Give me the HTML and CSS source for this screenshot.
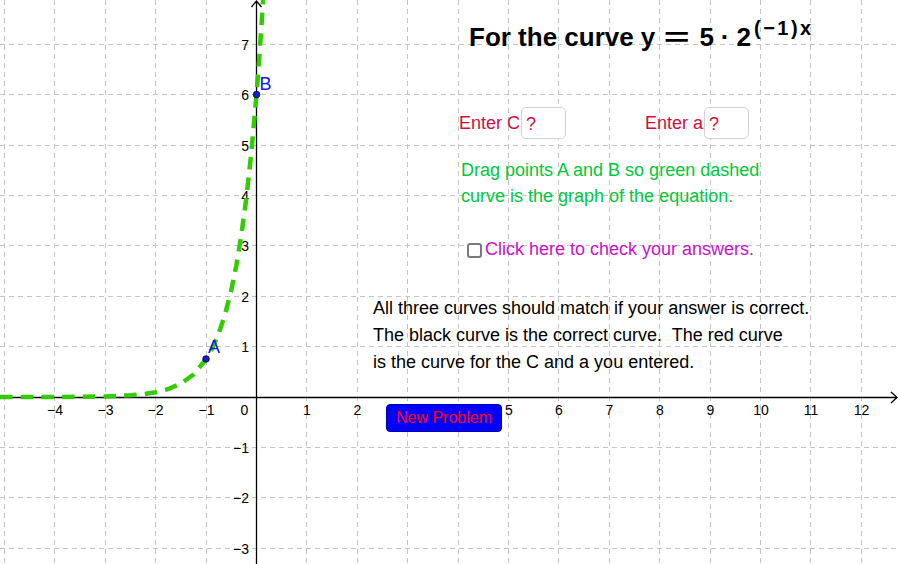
FILE: index.html
```html
<!DOCTYPE html>
<html>
<head>
<meta charset="utf-8">
<link rel="stylesheet" href="styles.css">
</head>
<body>
<div class="stage">
  <svg class="graph" width="900" height="564" viewBox="0 0 900 564" xmlns="http://www.w3.org/2000/svg">
    <g class="grid">
      <line x1="4.5" y1="0" x2="4.5" y2="564"/>
      <line x1="54.5" y1="0" x2="54.5" y2="564"/>
      <line x1="105.5" y1="0" x2="105.5" y2="564"/>
      <line x1="155.5" y1="0" x2="155.5" y2="564"/>
      <line x1="206.5" y1="0" x2="206.5" y2="564"/>
      <line x1="306.5" y1="0" x2="306.5" y2="564"/>
      <line x1="357.5" y1="0" x2="357.5" y2="564"/>
      <line x1="407.5" y1="0" x2="407.5" y2="564"/>
      <line x1="458.5" y1="0" x2="458.5" y2="564"/>
      <line x1="508.5" y1="0" x2="508.5" y2="564"/>
      <line x1="558.5" y1="0" x2="558.5" y2="564"/>
      <line x1="609.5" y1="0" x2="609.5" y2="564"/>
      <line x1="659.5" y1="0" x2="659.5" y2="564"/>
      <line x1="710.5" y1="0" x2="710.5" y2="564"/>
      <line x1="760.5" y1="0" x2="760.5" y2="564"/>
      <line x1="810.5" y1="0" x2="810.5" y2="564"/>
      <line x1="861.5" y1="0" x2="861.5" y2="564"/>
      <line x1="0" y1="44.5" x2="900" y2="44.5"/>
      <line x1="0" y1="94.5" x2="900" y2="94.5"/>
      <line x1="0" y1="145.5" x2="900" y2="145.5"/>
      <line x1="0" y1="195.5" x2="900" y2="195.5"/>
      <line x1="0" y1="245.5" x2="900" y2="245.5"/>
      <line x1="0" y1="296.5" x2="900" y2="296.5"/>
      <line x1="0" y1="346.5" x2="900" y2="346.5"/>
      <line x1="0" y1="447.5" x2="900" y2="447.5"/>
      <line x1="0" y1="497.5" x2="900" y2="497.5"/>
      <line x1="0" y1="548.5" x2="900" y2="548.5"/>
    </g>
    <g class="axes">
      <line x1="0" y1="397.5" x2="897" y2="397.5"/>
      <polyline points="891,392 897,397.5 891,403"/>
      <line x1="256.5" y1="564" x2="256.5" y2="1"/>
      <polyline points="251.5,7 256.5,1 261.5,7"/>
    </g>
    <g class="ticks ticks-x">
      <text x="55" y="415">−4</text>
      <text x="105.5" y="415">−3</text>
      <text x="155.5" y="415">−2</text>
      <text x="206.5" y="415">−1</text>
      <text x="244.5" y="415">0</text>
      <text x="307" y="415">1</text>
      <text x="357.5" y="415">2</text>
      <text x="509" y="415">5</text>
      <text x="559" y="415">6</text>
      <text x="609.5" y="415">7</text>
      <text x="660" y="415">8</text>
      <text x="710.5" y="415">9</text>
      <text x="761" y="415">10</text>
      <text x="811" y="415">11</text>
      <text x="861.5" y="415">12</text>
    </g>
    <g class="ticks ticks-y">
      <text x="249" y="49.5">7</text>
      <text x="249" y="100">6</text>
      <text x="249" y="150.5">5</text>
      <text x="249" y="200.5">4</text>
      <text x="249" y="251">3</text>
      <text x="249" y="301.5">2</text>
      <text x="249" y="352">1</text>
      <text x="249" y="452.5">−1</text>
      <text x="249" y="503">−2</text>
      <text x="249" y="553.5">−3</text>
    </g>
    <polyline class="curve" points="0,397 54.9,396.93 80.1,396.79 105.3,396.41 130.5,395.33 143.1,394.19 155.7,392.28 168.3,389.05 180.9,383.63 193.5,374.52 206.1,359.2 212.4,347.95 218.7,333.43 225,314.57 231.3,290.08 236.34,265.37 241.38,234.94 246.42,197.49 251.46,151.37 256.5,94.6 259.02,61.45 261.54,24.71 263.56,-7.6"/>
    <circle class="pt" cx="206" cy="359" r="3.3"/>
    <circle class="pt" cx="256.5" cy="94.6" r="3.3"/>
    <text class="pt-label" x="208" y="353">A</text>
    <text class="pt-label" x="259.5" y="89.5">B</text>
  </svg>

  <div class="title">For the curve<span class="m-y">y</span><span class="m-eq">=</span><span class="m-5">5</span><span class="m-dot">·</span><span class="m-2">2</span><sup class="m-sup">(−1)x</sup></div>

  <div class="enter-row">
    <div class="enter">
      <span class="enter-label">Enter C</span>
      <div class="input-box">?</div>
    </div>
    <div class="enter">
      <span class="enter-label">Enter a</span>
      <div class="input-box">?</div>
    </div>
  </div>

  <div class="instructions">Drag points A and B so green dashed<br>curve is the graph of the equation.</div>

  <label class="check-row">
    <span class="checkbox"></span>
    <span class="check-text">Click here to check your answers.</span>
  </label>

  <div class="note">All three curves should match if your answer is correct.
The black curve is the correct curve.  The red curve
is the curve for the C and a you entered.</div>

  <div class="new-btn">New Problem</div>
</div>
</body>
</html>
```

FILE: styles.css
```css
html, body {
  margin: 0;
  padding: 0;
  background: #ffffff;
}

.stage {
  position: relative;
  width: 900px;
  height: 564px;
  overflow: hidden;
  background: #ffffff;
  font-family: "Liberation Sans", Arial, sans-serif;
}

.graph {
  display: block;
}

.grid line {
  stroke: #c4c4c4;
  stroke-width: 1;
  stroke-dasharray: 5 4;
}

.axes line,
.axes polyline {
  stroke: #000000;
  stroke-width: 1.3;
  fill: none;
}

.ticks text {
  font-family: "Liberation Sans", Arial, sans-serif;
  font-size: 14px;
  fill: #000000;
}

.ticks-x text {
  text-anchor: middle;
}

.ticks-y text {
  text-anchor: end;
}

.curve {
  fill: none;
  stroke: #33cc00;
  stroke-width: 4.5;
  stroke-dasharray: 12.5 8.2;
  stroke-linejoin: round;
}

.pt {
  fill: #1a1ad0;
  stroke: #000033;
  stroke-width: 0.8;
}

.pt-label {
  font-family: "Liberation Sans", Arial, sans-serif;
  font-size: 18px;
  fill: #1414f0;
}

/* Title */
.title {
  position: absolute;
  left: 469px;
  top: 22px;
  font-size: 26px;
  line-height: 30px;
  font-weight: bold;
  color: #000000;
  white-space: nowrap;
}

.m-y {
  margin-left: 7px;
}

.m-eq {
  display: inline-block;
  margin-left: 14px;
  transform: scaleX(1.7);
}

.m-5 {
  margin-left: 15px;
}

.m-dot {
  margin-left: 7px;
}

.m-2 {
  margin-left: 7px;
}

.m-sup {
  font-size: 20px;
  vertical-align: 11px;
  letter-spacing: 2.5px;
  margin-left: 3px;
  line-height: 0;
}

/* Enter C / Enter a */
.enter-row {
  position: absolute;
  left: 459px;
  top: 107px;
  display: flex;
  gap: 79px;
}

.enter {
  display: flex;
  align-items: center;
  gap: 1px;
}

.enter-label,
.input-box {
  font-size: 18px;
  line-height: 22px;
  color: #d0103a;
}

.input-box {
  box-sizing: border-box;
  width: 45px;
  height: 32px;
  padding: 5px 0 0 4px;
  border: 1px solid #d2d2d2;
  border-radius: 5px;
  background: #ffffff;
}

/* Green instructions */
.instructions {
  position: absolute;
  left: 461px;
  top: 157px;
  font-size: 18px;
  line-height: 26px;
  color: #00c83c;
  white-space: nowrap;
}

/* Checkbox */
.check-row {
  position: absolute;
  left: 467px;
  top: 238px;
  display: flex;
  align-items: center;
  gap: 3px;
}

.checkbox {
  box-sizing: border-box;
  width: 15px;
  height: 15px;
  border: 2px solid #7a7a7a;
  border-radius: 3px;
  background: #ffffff;
  margin-top: 2px;
}

.check-text {
  font-size: 18px;
  line-height: 22px;
  color: #cc11cc;
  white-space: nowrap;
}

/* Black note */
.note {
  position: absolute;
  left: 373px;
  top: 295px;
  font-size: 18px;
  line-height: 27px;
  color: #000000;
  white-space: pre;
}

/* New Problem button */
.new-btn {
  position: absolute;
  left: 386px;
  top: 404px;
  box-sizing: border-box;
  width: 116px;
  height: 28px;
  background: #0000ff;
  border: 1px solid #0000b0;
  border-radius: 4px;
  color: #ff0000;
  font-size: 16px;
  line-height: 26px;
  text-align: center;
}
```
